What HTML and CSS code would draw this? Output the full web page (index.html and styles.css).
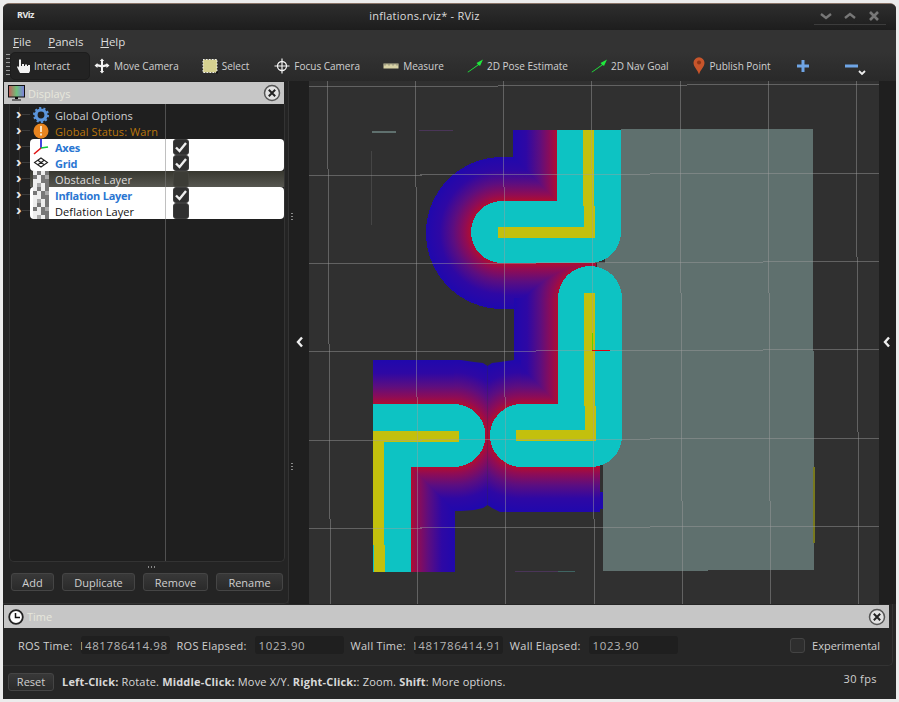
FILE: index.html
```html
<!DOCTYPE html>
<html lang="en">
<head>
  <meta charset="UTF-8" />
  <title>inflations.rviz* - RViz</title>
  <link rel="stylesheet" href="styles.css">
</head>
<body>
  <svg class="defs" width="0" height="0">
    <symbol id="close" viewBox="0 0 18 18">
      <circle cx="9" cy="9" r="7.5" fill="#e2e2e2" stroke="#555" stroke-width="1.5"/>
      <path d="M5.8 5.8l6.4 6.4M12.2 5.8l-6.4 6.4" stroke="#222" stroke-width="2"/>
    </symbol>
    <symbol id="cells" viewBox="0 0 16 16">
      <rect width="16" height="16" fill="#777"/>
      <path d="M0 0h4v4H0zM8 0h4v4H8zM4 4h4v4H4zM0 8h8v4H0zM8 12h4v4H8zM0 12h4v4H0z" fill="#eee"/>
      <path d="M12 4h4v4h-4zM4 12h4v4H4z" fill="#aaa"/>
    </symbol>
    <symbol id="arrow" viewBox="0 0 16 14">
      <path d="M0.5 13L11 5.5 9.5 4 16 0.5 13 7 11.8 6 1 13.6z" fill="#1fe83c"/>
    </symbol>
    <symbol id="tick" viewBox="0 0 16 16">
      <path d="M3 8.5l3.5 3.5L13 4" fill="none" stroke="#eee" stroke-width="2.4"/>
    </symbol>
  </svg>

  <div class="window">
    <div class="titlebar">
      <span class="app-logo">RViz</span>
      <span class="title-text">inflations.rviz* - RViz</span>
      <div class="win-buttons">
        <svg width="24" height="12" viewBox="0 0 24 12"><path d="M7 4l5 4 5-4" fill="none" stroke="#777" stroke-width="2.4"/></svg>
        <svg width="24" height="12" viewBox="0 0 24 12"><path d="M7 8l5-4 5 4" fill="none" stroke="#777" stroke-width="2.4"/></svg>
        <svg width="24" height="12" viewBox="0 0 24 12"><path d="M8 2l8 8M16 2l-8 8" fill="none" stroke="#777" stroke-width="2.6"/></svg>
      </div>
    </div>

    <div class="menubar">
      <span><u>F</u>ile</span>
      <span><u>P</u>anels</span>
      <span><u>H</u>elp</span>
    </div>

    <div class="toolbar">
      <div class="grip"></div>
      <div class="tool tool-active">
        <svg width="16" height="16" viewBox="0 0 16 16"><path d="M3 1.5h2V8h1V6h2v2h1V6.5h2V8h1V7h2v6l-1 2H4L1 9l1-1 1 1.500z" fill="#f2f2f2"/></svg>
        <span>Interact</span>
      </div>
      <div class="tool">
        <svg width="16" height="16" viewBox="0 0 16 16"><path d="M8 0.500l2.200 2.500H9v4l3.500-1V5l3 2.500-3 2.500V8.500L9 9.300V13h1.200L8 15.500 5.800 13H7V9.300L3.500 8.500V10l-3-2.500 3-2.500v1L7 7V3H5.800z" fill="#f2f2f2"/></svg>
        <span>Move Camera</span>
      </div>
      <div class="tool">
        <svg width="16" height="16" viewBox="0 0 16 16"><rect x="1" y="1.500" width="14" height="13" fill="#d6d190" stroke="#eee" stroke-dasharray="1.500 1.500"/><rect x="14" y="13.500" width="2" height="2" fill="#111"/></svg>
        <span>Select</span>
      </div>
      <div class="tool tool-focus">
        <svg width="16" height="16" viewBox="0 0 16 16"><circle cx="8" cy="8" r="4.500" fill="none" stroke="#f2f2f2" stroke-width="1.300"/><path d="M8 0.500v15M0.500 8h15" stroke="#f2f2f2" stroke-width="1.200"/></svg>
        <span>Focus Camera</span>
      </div>
      <div class="tool">
        <svg width="16" height="16" viewBox="0 0 16 16"><rect x="0.500" y="5.500" width="15" height="5" fill="#d8d2a6"/><path d="M2 5.500v2M4 5.500v1M6 5.500v2M8 5.500v1M10 5.500v2M12 5.500v1M14 5.500v2" stroke="#555" stroke-width="0.800"/></svg>
        <span>Measure</span>
      </div>
      <div class="tool">
        <svg width="16" height="14"><use href="#arrow"/></svg>
        <span>2D Pose Estimate</span>
      </div>
      <div class="tool">
        <svg width="16" height="14"><use href="#arrow"/></svg>
        <span>2D Nav Goal</span>
      </div>
      <div class="tool">
        <svg width="14" height="18" viewBox="0 0 12 18"><path d="M6 17.500C4.500 12.500 0.500 10 0.500 5.800a5.500 5.500 0 0 1 11 0C11.500 10 7.500 12.500 6 17.500z" fill="#c8552b"/><circle cx="6" cy="5.500" r="2" fill="#8e3517"/></svg>
        <span>Publish Point</span>
      </div>
      <div class="tool tool-plus">
        <svg width="12" height="12" viewBox="0 0 12 12"><path d="M4.500 0h3v4.500H12v3H7.500V12h-3V7.500H0v-3h4.500z" fill="#6fa5e6"/></svg>
      </div>
      <div class="tool tool-minus">
        <svg width="13" height="4" viewBox="0 0 13 4"><rect width="13" height="3" y="0.500" fill="#6fa5e6"/></svg>
        <svg class="more" width="8" height="6" viewBox="0 0 8 6"><path d="M1 1l3 3 3-3" fill="none" stroke="#eee" stroke-width="1.800"/></svg>
      </div>
    </div>

    <div class="main">
      <div class="dock">
        <div class="panel-head">
          <svg width="17" height="16" viewBox="0 0 17 16">
            <defs><linearGradient id="screen"><stop offset="0" stop-color="#c65a5a"/><stop offset=".5" stop-color="#6fbf7a"/><stop offset="1" stop-color="#7d7de0"/></linearGradient></defs>
            <rect x="0.500" y="0.500" width="16" height="11.500" fill="url(#screen)" stroke="#111"/>
            <path d="M7 12h3v2H7zM4 14.500h9v1H4z" fill="#111"/>
          </svg>
          <span class="panel-name">Displays</span>
          <svg class="panel-close" width="18" height="18"><use href="#close"/></svg>
        </div>

        <div class="tree">
          <div class="row">
            <div class="twist">›</div>
            <div class="cell">
              <svg class="row-icon" width="16" height="16" viewBox="0 0 16 16"><circle cx="8" cy="8" r="5" fill="none" stroke="#5b95dc" stroke-width="3.200"/><circle cx="8" cy="8" r="7" fill="none" stroke="#5b95dc" stroke-width="2" stroke-dasharray="2.200 2.200"/></svg>
              <span class="row-name">Global Options</span>
            </div>
          </div>
          <div class="row">
            <div class="twist">›</div>
            <div class="cell">
              <svg class="row-icon" width="16" height="16" viewBox="0 0 16 16"><circle cx="8" cy="8" r="7.500" fill="#e8841f"/><path d="M7 3h2v6H7zM7 10.500h2v2H7z" fill="#fbe3c4"/></svg>
              <span class="row-name warn">Global Status: Warn</span>
            </div>
          </div>
          <div class="row">
            <div class="twist">›</div>
            <div class="cell on cell-first">
              <svg class="row-icon" width="16" height="16" viewBox="0 0 16 16"><path d="M8 9V0" stroke="#1414d8" stroke-width="1.600"/><path d="M8 9l7-1" stroke="#10c83c" stroke-width="1.600"/><path d="M8 9l-7 6" stroke="#e01414" stroke-width="1.600"/></svg>
              <span class="row-name blue">Axes</span>
              <span class="check"><svg width="16" height="16"><use href="#tick"/></svg></span>
            </div>
          </div>
          <div class="row">
            <div class="twist">›</div>
            <div class="cell on cell-last">
              <svg class="row-icon" width="16" height="16" viewBox="0 0 16 16"><path d="M8 3l6.500 4.500L8 12 1.500 7.500zM4.800 5.200l6.500 4.500M11.200 5.200L4.800 9.800" fill="none" stroke="#222" stroke-width="1.100"/></svg>
              <span class="row-name blue">Grid</span>
              <span class="check"><svg width="16" height="16"><use href="#tick"/></svg></span>
            </div>
          </div>
          <div class="row">
            <div class="twist">›</div>
            <div class="cell selected">
              <svg class="row-icon" width="16" height="16"><use href="#cells"/></svg>
              <span class="row-name">Obstacle Layer</span>
              <span class="check"></span>
            </div>
          </div>
          <div class="row">
            <div class="twist">›</div>
            <div class="cell on cell-first">
              <svg class="row-icon" width="16" height="16"><use href="#cells"/></svg>
              <span class="row-name blue">Inflation Layer</span>
              <span class="check"><svg width="16" height="16"><use href="#tick"/></svg></span>
            </div>
          </div>
          <div class="row">
            <div class="twist">›</div>
            <div class="cell on cell-last">
              <svg class="row-icon" width="16" height="16"><use href="#cells"/></svg>
              <span class="row-name dark">Deflation Layer</span>
              <span class="check"></span>
            </div>
          </div>
        </div>

        <div class="dots dots-h"></div>

        <div class="dock-buttons">
          <button class="btn btn-add">Add</button>
          <button class="btn btn-dup">Duplicate</button>
          <button class="btn btn-rem">Remove</button>
          <button class="btn btn-ren">Rename</button>
        </div>
      </div>

      <div class="splitter">
        <div class="dots dots-v dots-top"></div>
        <div class="dots dots-v dots-bottom"></div>
        <svg width="8" height="12" viewBox="0 0 8 12"><path d="M6 1.500L2 6l4 4.500" fill="none" stroke="#eee" stroke-width="2.400"/></svg>
      </div>

      <svg class="view" width="570" height="523" viewBox="309 81 570 523" shape-rendering="crispEdges">
        <defs>
          <linearGradient id="ramp">
            <stop offset="0" stop-color="#2008ad"/>
            <stop offset=".3" stop-color="#2e08a4"/>
            <stop offset=".6" stop-color="#5c0e80"/>
            <stop offset=".85" stop-color="#8f0c55"/>
            <stop offset="1" stop-color="#b00d30"/>
          </linearGradient>
          <radialGradient id="rampR">
            <stop offset=".41" stop-color="#b00d30"/>
            <stop offset=".5" stop-color="#8f0c55"/>
            <stop offset=".65" stop-color="#5c0e80"/>
            <stop offset=".83" stop-color="#2e08a4"/>
            <stop offset="1" stop-color="#2008ad"/>
          </radialGradient>
          <linearGradient id="topH" href="#ramp" gradientUnits="userSpaceOnUse" x1="513" y1="0" x2="557" y2="0"/>
          <linearGradient id="topV" href="#ramp" gradientUnits="userSpaceOnUse" x1="0" y1="157" x2="0" y2="201"/>
          <linearGradient id="midV" href="#ramp" gradientUnits="userSpaceOnUse" x1="0" y1="309" x2="0" y2="263"/>
          <linearGradient id="lowH" href="#ramp" gradientUnits="userSpaceOnUse" x1="514" y1="0" x2="558" y2="0"/>
          <linearGradient id="lowV" href="#ramp" gradientUnits="userSpaceOnUse" x1="0" y1="360" x2="0" y2="404"/>
          <linearGradient id="botV" href="#ramp" gradientUnits="userSpaceOnUse" x1="0" y1="512" x2="0" y2="467"/>
          <linearGradient id="botH" href="#ramp" gradientUnits="userSpaceOnUse" x1="455" y1="0" x2="411" y2="0"/>
          <radialGradient id="haloA" href="#rampR" gradientUnits="userSpaceOnUse" cx="502" cy="232" r="75"/>
          <radialGradient id="haloB" href="#rampR" gradientUnits="userSpaceOnUse" cx="590" cy="298" r="76"/>
          <radialGradient id="haloC" href="#rampR" gradientUnits="userSpaceOnUse" cx="454" cy="435.500" r="76"/>
          <radialGradient id="haloD" href="#rampR" gradientUnits="userSpaceOnUse" cx="521" cy="435.500" r="76"/>
          <clipPath id="clipC"><path d="M454 360H461L474 362 483 363 487.500 366V505L483 508 474 510 461 511H454z"/></clipPath>
          <clipPath id="clipD"><path d="M487.500 366L492 363 500 362 514 360H521V512H500L492 508 487.500 505z"/></clipPath>
        </defs>

        <rect x="309" y="81" width="570" height="523" fill="#303030"/>

        <!-- free space / unknown area -->
        <path d="M621 129H813L814 570 603 571V465H600V268H597V263H605V232H621z" fill="#5f706e"/>
        <path d="M814 467v76" stroke="#77791f" stroke-width="1.500"/>

        <!-- inflation around the walls -->
        <path d="M502 157A75 75 0 0 0 502 309z" fill="url(#haloA)"/>
        <path d="M513 130H557V201L513 157z" fill="url(#topH)"/>
        <path d="M502 157H513L557 201H502z" fill="url(#topV)"/>
        <rect x="502" y="263" width="94" height="46" fill="url(#midV)"/>
        <path d="M514 298H558V404L514 360z" fill="url(#lowH)"/>
        <path d="M514 307.600L530 291 545 280 558 272 575 267 589 265H596V298H514z" fill="url(#haloB)"/>
        <path d="M373 360H454V404H373z" fill="url(#lowV)"/>
        <path d="M521 367L558 404H521z" fill="url(#lowV)"/>
        <rect x="454" y="355" width="34" height="165" fill="url(#haloC)" clip-path="url(#clipC)"/>
        <rect x="487" y="355" width="34" height="165" fill="url(#haloD)" clip-path="url(#clipD)"/>
        <path d="M411 467H454V511z" fill="url(#botV)"/>
        <path d="M411 467L455 511V572H411z" fill="url(#botH)"/>
        <rect x="521" y="455" width="79" height="57" fill="url(#botV)"/>
        <rect x="600" y="492" width="3" height="17" fill="#2008ad"/>

        <!-- lethal zone -->
        <path d="M557 130H621V232A31 31 0 0 1 590 263H502A31 31 0 0 1 502 201H557z" fill="#0dc3c3"/>
        <path d="M558 298A32 32 0 0 1 622 298V436A31 31 0 0 1 591 467H521.500A31.500 31.500 0 0 1 521.500 404H558z" fill="#0dc3c3"/>
        <path d="M373 404H454A31.500 31.500 0 0 1 454 467H411V572H373z" fill="#0dc3c3"/>

        <!-- walls -->
        <path d="M583 130H594V206H595V238H498V227H584V206H583z" fill="#c3c00d"/>
        <path d="M584 293H595V406H596V441H516V430H585V406H584z" fill="#c3c00d"/>
        <path d="M373 431H459V442H384V545H385V572H374V545H373z" fill="#c3c00d"/>

        <!-- scattered bits -->
        <path d="M372 132H396" stroke="#5f706e" stroke-width="2"/>
        <path d="M419 130.500H453" stroke="#4a3558" stroke-width="1"/>
        <path d="M371.500 151V225" stroke="#454545" stroke-width="1"/>
        <path d="M515 571.500H558" stroke="#4a3558" stroke-width="1"/>
        <path d="M558 571.500H575" stroke="#3f6462" stroke-width="1"/>

        <!-- grid -->
        <g stroke="#a0a0a0" stroke-opacity=".45" stroke-width="1">
          <path d="M309 87L879 84"/>
          <path d="M309 175.500L879 173"/>
          <path d="M309 264L879 261.500"/>
          <path d="M309 352L879 349.500"/>
          <path d="M309 440.500L879 438"/>
          <path d="M309 528.500L879 526"/>
          <path d="M327.500 81L330.500 604"/>
          <path d="M415.500 81L418 604"/>
          <path d="M503.500 81L506 604"/>
          <path d="M591.500 81L594.500 604"/>
          <path d="M680 81L682.500 604"/>
          <path d="M768 81L770.500 604"/>
          <path d="M856 81L859 604"/>
        </g>

        <!-- axes -->
        <path d="M592.500 350V333" stroke="#5fd000" stroke-width="1.500"/>
        <path d="M592 350.500H610" stroke="#e00010" stroke-width="1.500"/>
      </svg>

      <div class="side-strip">
        <svg width="8" height="12" viewBox="0 0 8 12"><path d="M6 1.500L2 6l4 4.500" fill="none" stroke="#eee" stroke-width="2.400"/></svg>
      </div>
    </div>

    <div class="time-panel">
      <div class="panel-head time-head">
        <svg width="16" height="16" viewBox="0 0 16 16"><circle cx="8" cy="8" r="6.800" fill="#fff" stroke="#222" stroke-width="1.800"/><path d="M7.500 4v4.500H12" fill="none" stroke="#111" stroke-width="1.500"/></svg>
        <span class="panel-name">Time</span>
        <svg class="panel-close" width="18" height="18"><use href="#close"/></svg>
      </div>
      <div class="time-body">
        <span class="time-label">ROS Time:</span>
        <span class="time-value clipped"><span>1481786414.98</span></span>
        <span class="time-label">ROS Elapsed:</span>
        <span class="time-value"><span>1023.90</span></span>
        <span class="time-label">Wall Time:</span>
        <span class="time-value clipped"><span>1481786414.91</span></span>
        <span class="time-label">Wall Elapsed:</span>
        <span class="time-value"><span>1023.90</span></span>
        <span class="exp-box"></span>
        <span class="exp-label">Experimental</span>
      </div>
    </div>

    <div class="statusbar">
      <button class="btn btn-reset">Reset</button>
      <span class="hint"><b>Left-Click:</b> Rotate. <b>Middle-Click:</b> Move X/Y. <b>Right-Click:</b>: Zoom. <b>Shift</b>: More options.</span>
      <span class="fps">30 fps</span>
    </div>
  </div>
</body>
</html>
```

FILE: styles.css
```css
* {
  margin: 0;
  padding: 0;
  box-sizing: border-box;
}

html, body {
  width: 899px;
  height: 702px;
  overflow: hidden;
}

body {
  padding: 3px;
  background: #ececec;
  font-family: "Open Sans", sans-serif;
  font-size: 11px;
  color: #d0d0d0;
}

.defs {
  position: absolute;
}

svg {
  display: block;
  flex: none;
}

.window {
  width: 893px;
  height: 696px;
  display: flex;
  flex-direction: column;
  background: #262626;
  border-radius: 6px 6px 0 0;
  border-top: 1px solid #8a7468;
  overflow: hidden;
}

.titlebar {
  height: 26px;
  display: flex;
  align-items: center;
  justify-content: center;
  position: relative;
  padding: 0 50px 3px 0;
  background: linear-gradient(#2e2e2e, #1d1d1d);
  font-size: 11px;
  letter-spacing: 0.25px;
  color: #dcdcdc;
}

.app-logo {
  position: absolute;
  left: 14px;
  top: 4px;
  font-size: 9px;
  font-weight: 700;
  letter-spacing: -0.5px;
  color: #e8e8e8;
}

.win-buttons {
  position: absolute;
  right: 10px;
  top: 3px;
  height: 18px;
  display: flex;
  align-items: center;
  border-bottom: 1px solid #3c3c3c;
}

.menubar {
  height: 22px;
  display: flex;
  align-items: center;
  gap: 17px;
  padding-left: 10px;
  background: #333;
  font-size: 11.5px;
  color: #dedede;
}

.toolbar {
  height: 29px;
  display: flex;
  align-items: center;
  gap: 23px;
  position: relative;
  padding-bottom: 1px;
  background: linear-gradient(#333, #292929);
  font-size: 10px;
}

.grip {
  position: absolute;
  left: 3px;
  top: 2px;
  width: 4px;
  height: 24px;
  background: repeating-linear-gradient(#9a9a9a 0 1px, transparent 1px 4px);
}

.tool {
  display: flex;
  align-items: center;
  gap: 4px;
  white-space: nowrap;
}

.tool-active {
  height: 28px;
  gap: 2px;
  margin-left: 7px;
  margin-right: -19px;
  padding: 0 19px 0 5px;
  background: #232323;
  border: 1px solid #1d1d1d;
  border-radius: 5px;
}

.tool-focus {
  margin-left: 2px;
}

.tool-plus {
  margin-left: 3px;
  margin-right: 13px;
}

.tool-minus {
  position: relative;
}

.more {
  position: absolute;
  left: 13px;
  top: 6px;
}

.main {
  height: 523px;
  display: flex;
}

.dock {
  width: 286px;
  padding-left: 1px;
  padding-top: 1px;
  border-right: 1px solid #333;
  border-bottom: 1px solid #333;
  border-radius: 0 0 5px 0;
  background: #242424;
}

.panel-head {
  width: 280px;
  height: 22px;
  display: flex;
  align-items: center;
  gap: 3px;
  padding-left: 4px;
  background: #c6c6c6;
}

.panel-name {
  color: #e6e6dc;
  font-size: 11px;
}

.panel-close {
  margin-left: auto;
  margin-right: 3px;
}

.tree {
  width: 276px;
  height: 458px;
  margin-left: 5px;
  padding-top: 3px;
  position: relative;
  background: #1f1f1f;
  border: 1px solid #333;
  border-top: none;
  border-radius: 0 0 5px 5px;
}

.tree::after {
  content: "";
  position: absolute;
  left: 155px;
  top: 0;
  bottom: 0;
  width: 1px;
  background: rgba(130, 130, 130, 0.5);
}

.row {
  height: 16px;
  display: flex;
}

.twist {
  width: 20px;
  padding-left: 6px;
  font-size: 15px;
  font-weight: 700;
  line-height: 13px;
  color: #e8e8e8;
  background:
    linear-gradient(#3c3c3c, #3c3c3c) 12px 7px / 8px 1px no-repeat,
    linear-gradient(#333, #333) 9px 0 / 1px 100% no-repeat;
}

.cell {
  width: 254px;
  display: flex;
  align-items: center;
  padding-left: 3px;
}

.row-icon {
  margin-right: 6px;
}

.row-name {
  width: 118px;
  white-space: nowrap;
  letter-spacing: 0.1px;
}

.warn {
  color: #b8750c;
}

.blue {
  color: #2a76d2;
  font-weight: 700;
  letter-spacing: -0.25px;
}

.dark {
  color: #111;
}

.on {
  background: #fff;
}

.cell-first {
  border-radius: 4px 4px 0 0;
}

.cell-last {
  border-radius: 0 0 4px 4px;
}

.selected {
  background: linear-gradient(#37372f, #565650);
  color: #dedede;
}

.check {
  width: 16px;
  height: 16px;
  background: #303030;
  border: 1px solid #3e3e3e;
  border-radius: 3px;
  display: flex;
  align-items: center;
  justify-content: center;
}

.selected .check {
  background: #3c3c36;
  border-color: #44443e;
}

.dots {
  background: repeating-linear-gradient(90deg, #8a8a8a 0 1px, transparent 1px 3px);
}

.dots-h {
  width: 7px;
  height: 2px;
  margin: 4px 0 5px 144px;
}

.dock-buttons {
  display: flex;
  gap: 8px;
  margin-left: 7px;
}

.btn {
  height: 18px;
  font-family: "Open Sans", sans-serif;
  font-size: 11px;
  color: #cfcfcf;
  background: linear-gradient(#383838, #2a2a2a);
  border: 1px solid #454545;
  border-radius: 3px;
}

.btn-add { width: 43px; }
.btn-dup { width: 73px; }
.btn-rem { width: 65px; }
.btn-ren { width: 67px; }
.btn-reset { width: 46px; }

.splitter {
  width: 20px;
  position: relative;
  display: flex;
  align-items: center;
  padding-left: 7px;
  padding-bottom: 2px;
  background: #1f1f1f;
}

.dots-v {
  position: absolute;
  left: 2px;
  width: 2px;
  height: 7px;
  background: repeating-linear-gradient(#8a8a8a 0 1px, transparent 1px 3px);
}

.dots-top { top: 132px; }
.dots-bottom { top: 382px; }

.side-strip {
  width: 17px;
  display: flex;
  align-items: center;
  padding-left: 4px;
  padding-bottom: 2px;
  background: #1f1f1f;
}

.time-panel {
  height: 62px;
  padding: 1px 0 0 1px;
  border-right: 1px solid #333;
  border-bottom: 1px solid #333;
  border-radius: 0 0 5px 0;
  width: 890px;
}

.time-head {
  width: 885px;
  height: 23px;
}

.time-body {
  display: flex;
  align-items: center;
  height: 34px;
  padding-left: 14px;
}

.time-label {
  margin-right: 8px;
  white-space: nowrap;
  letter-spacing: 0.25px;
}

.time-value {
  width: 89px;
  height: 18px;
  margin-right: 7px;
  padding: 0 2px 0 4px;
  display: flex;
  align-items: center;
  overflow: hidden;
  background: #1f1f1f;
  border-radius: 3px;
  font-size: 11.5px;
  letter-spacing: 0.6px;
  color: #b4b4b4;
  white-space: nowrap;
}

.clipped {
  justify-content: flex-end;
}

.exp-box {
  width: 15px;
  height: 15px;
  margin-left: auto;
  margin-right: 7px;
  background: #2e2e2e;
  border: 1px solid #444;
  border-radius: 3px;
}

.exp-label {
  margin-right: 12px;
}

.statusbar {
  flex: 1;
  display: flex;
  align-items: center;
  padding: 0 19px 2px 5px;
  background: #262626;
}

.hint {
  margin-left: 8px;
  color: #d8d8d8;
  letter-spacing: 0.17px;
}

.fps {
  margin-left: auto;
  margin-bottom: 6px;
  letter-spacing: 0.4px;
}
```
